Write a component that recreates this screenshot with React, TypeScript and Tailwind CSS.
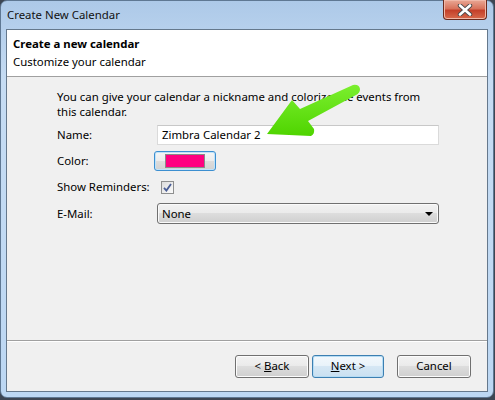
import React from 'react'

const font = { fontFamily: '"Noto Sans", "Open Sans", sans-serif' }

function WinButton({ children, primary }: { children: React.ReactNode; primary?: boolean }) {
  return (
    <button
      className={
        primary
          ? 'w-[72px] h-[23px] rounded-[3px] border border-[#3c7fb1] bg-[linear-gradient(#f2f8fc_0%,#e9f3fa_45%,#d5e7f4_50%,#c9e0f1_100%)] shadow-[inset_0_0_0_1px_#b6dcf4] text-[11.4px] text-black flex items-center justify-center'
          : 'w-[74px] h-[23px] rounded-[3px] border border-[#707070] bg-[linear-gradient(#f2f2f2_0%,#ebebeb_45%,#dddddd_50%,#cfcfcf_100%)] shadow-[inset_0_0_0_1px_#fcfcfc] text-[11.4px] text-black flex items-center justify-center'
      }
    >
      <span className="whitespace-pre">{children}</span>
    </button>
  )
}

export default function App() {
  return (
    <div className="w-[495px] h-[400px] bg-[#3d4653] overflow-hidden relative" style={font}>
      <div className="w-[494px] h-[398px] rounded-[7px] border border-[#5f7893] bg-[linear-gradient(#adc9e8_0%,#c6dcf3_20%,#bcd7f3_100%)] flex flex-col">
        {/* title bar */}
        <div className="h-[28px] flex items-start shrink-0">
          <div className="pl-[6px] h-[27px] flex items-center text-[11.4px] text-[#111]">Create New Calendar</div>
          <div className="ml-auto mr-[6px] -mt-[1px] w-[44px] h-[20px] rounded-b-[4px] border border-t-0 border-[#6a2a1e] bg-[linear-gradient(#e9a895_0%,#d8735c_45%,#c4402a_55%,#d86a4c_100%)] shadow-[inset_0_0_0_1px_#f0b8a8] flex items-center justify-center">
            <svg width="16" height="12" viewBox="0 0 16 12">
              <path d="M3 1.5 L13 10.5 M13 1.5 L3 10.5" stroke="#4a4a4a" strokeWidth="4.4" strokeLinecap="round" />
              <path d="M3 1.5 L13 10.5 M13 1.5 L3 10.5" stroke="#ffffff" strokeWidth="2.6" strokeLinecap="round" />
            </svg>
          </div>
        </div>

        {/* client area */}
        <div className="mx-[5px] h-[363px] border border-[#65788c] bg-[#f0f0f0] flex flex-col shrink-0">
          <div className="h-[47px] bg-white border-b border-[#a0a0a0] pl-[6px] pt-[5px] text-[11.4px] leading-[18px] text-black shrink-0">
            <div className="font-bold">Create a new calendar</div>
            <div>Customize your calendar</div>
          </div>

          <div className="flex-1 pl-[50px] pt-[12px] text-[11.4px] text-black">
            <div className="leading-[15px] whitespace-nowrap">
              You can give your calendar a nickname and colorize the events from
              <br />
              this calendar.
            </div>

            <div className="mt-[6px] flex flex-col">
              <div className="h-[20px] flex items-center">
                <div className="w-[100px]">Name:</div>
                <div className="w-[282px] h-[20px] bg-white border border-[#dadada] border-t-[#c8c8c8] pl-[4px] flex items-center">
                  Zimbra Calendar 2
                </div>
              </div>

              <div className="mt-[6px] h-[20px] flex items-center">
                <div className="w-[97px]">Color:</div>
                <div className="w-[62px] h-[20px] rounded-[3px] border border-[#3c8fd0] bg-[linear-gradient(#f6f6f6_0%,#ececec_50%,#dcdcdc_51%,#d2d2d2_100%)] shadow-[inset_0_0_0_1px_#bfe3fa] flex items-center justify-center">
                  <div className="w-[40px] h-[14px] bg-[#ff0080] border border-[#8a8a8a]" />
                </div>
              </div>

              <div className="mt-[6px] h-[20px] flex items-center">
                <div className="w-[104px]">Show Reminders:</div>
                <div className="w-[13px] h-[13px] border border-[#8e8f8f] bg-[linear-gradient(135deg,#dcdcdc,#fbfbfb)] flex items-center justify-center">
                  <svg width="9" height="9" viewBox="0 0 9 9">
                    <path d="M1 4.8 L3.4 7.6 L8 1" fill="none" stroke="#4a5e96" strokeWidth="1.8" />
                  </svg>
                </div>
              </div>

              <div className="mt-[6px] h-[21px] flex items-center">
                <div className="w-[100px]">E-Mail:</div>
                <div className="w-[282px] h-[21px] rounded-[3px] border border-[#707070] bg-[linear-gradient(#f2f2f2_0%,#ebebeb_45%,#dddddd_50%,#cfcfcf_100%)] shadow-[inset_0_0_0_1px_#fafafa] pl-[4px] pr-[5px] flex items-center">
                  <span className="flex-1">None</span>
                  <svg width="8" height="4" viewBox="0 0 8 4">
                    <path d="M0 0 L8 0 L4 4 Z" fill="#000" />
                  </svg>
                </div>
              </div>
            </div>
          </div>

          <div className="h-[51px] border-t border-[#a0a0a0] shadow-[inset_0_1px_0_#ffffff] flex items-center justify-end pr-[16px] shrink-0">
            <WinButton>
              {'< '}
              <span className="underline">B</span>
              {'ack'}
            </WinButton>
            <div className="w-[3px]" />
            <WinButton primary>
              <span className="underline">N</span>
              {'ext >'}
            </WinButton>
            <div className="w-[13px]" />
            <WinButton>Cancel</WinButton>
          </div>
        </div>
      </div>

      {/* annotation arrow */}
      <svg className="absolute left-0 top-0 pointer-events-none" width="495" height="400" viewBox="0 0 495 400">
        <defs>
          <linearGradient id="g" x1="0" y1="0" x2="0" y2="1">
            <stop offset="0" stopColor="#7bef2e" />
            <stop offset="1" stopColor="#4fd400" />
          </linearGradient>
        </defs>
        <path
          d="M267 134 L292 100 L300 109 L353 85 Q359 84 360 89 Q360 93 356 95 L308 121 L314 129 Q315 134 311 136 Z"
          fill="url(#g)"
        />
      </svg>
    </div>
  )
}
